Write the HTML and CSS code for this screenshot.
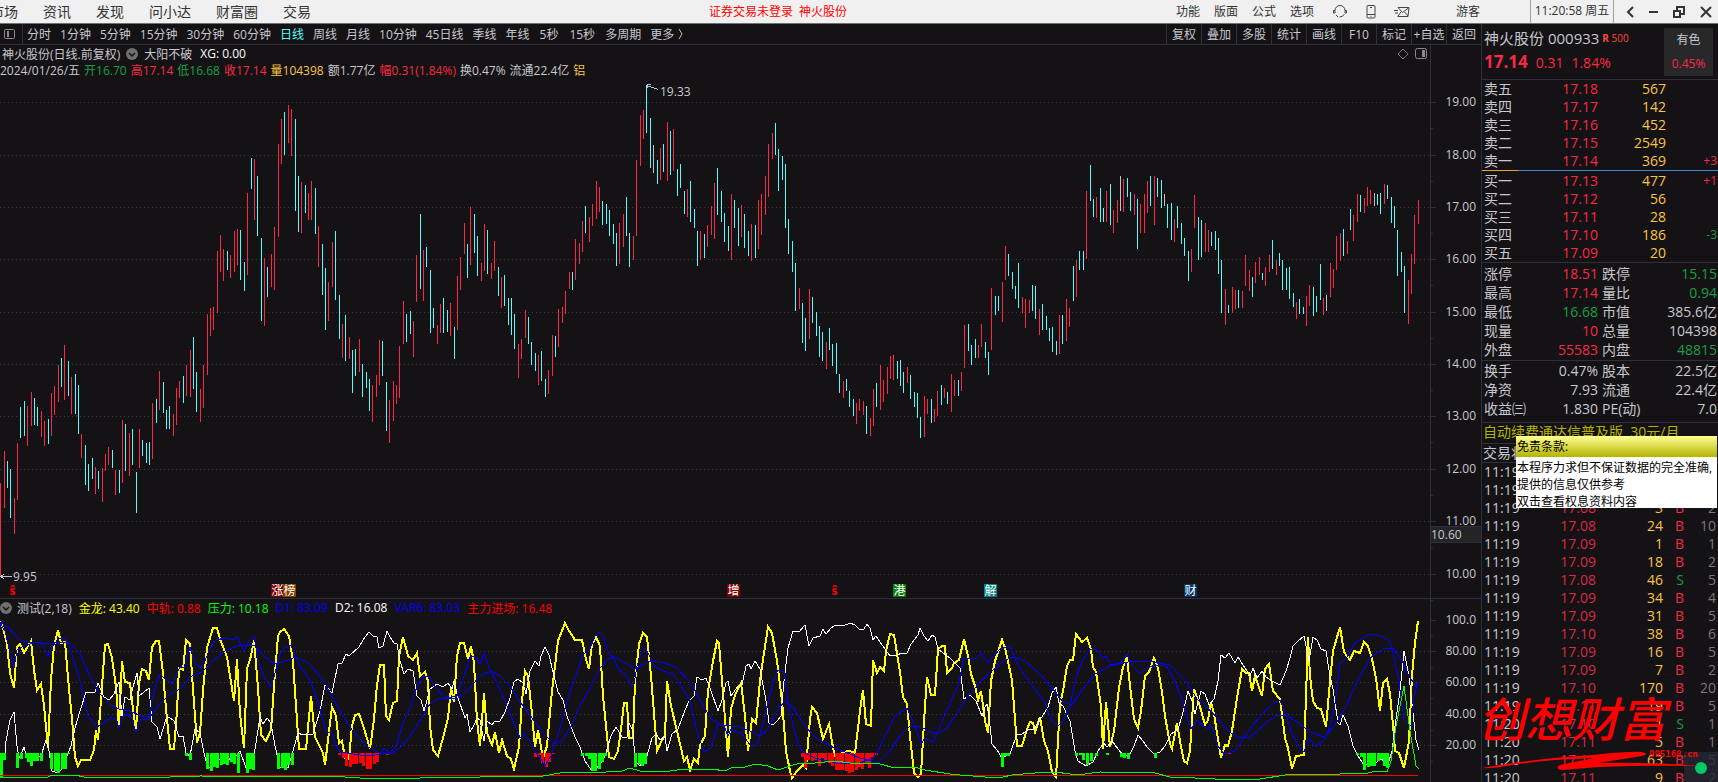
FILE: index.html
```html
<!DOCTYPE html>
<html lang="zh-CN">
<head>
    <meta charset="UTF-8">
    <meta name="viewport" content="width=device-width, initial-scale=1.0">
    <title>神火股份 000933</title>
    <link rel="stylesheet" href="styles.css">
</head>
<body>
    <header class="topbar">
        <nav class="menu">
            <a href="#">市场</a>
            <a href="#">资讯</a>
            <a href="#">发现</a>
            <a href="#">问小达</a>
            <a href="#">财富圈</a>
            <a href="#">交易</a>
        </nav>
        <div class="login">证券交易未登录&nbsp; 神火股份</div>
        <nav class="tools">
            <a href="#">功能</a>
            <a href="#">版面</a>
            <a href="#">公式</a>
            <a href="#">选项</a>
        </nav>
        <div class="top-icons">
            <button aria-label="客服">
                <svg width="16" height="14" viewBox="0 0 16 14" fill="none" stroke="#444"><path d="M3 8V5.500A5 5 0 0 1 13 5.500V8M3 5.500H1.500V8H3M13 5.500H14.500V8H13M12.500 9Q11 12 7.500 12M4 10L6 12"/></svg>
            </button>
            <button aria-label="手机">
                <svg width="10" height="14" viewBox="0 0 10 14" fill="none" stroke="#444"><rect x="1" y=".5" width="8" height="12.500" rx="1"/><path d="M1 9.500H9M4 2.500H6M4.500 11.300H5.500"/></svg>
            </button>
            <button aria-label="邮件">
                <svg width="16" height="12" viewBox="0 0 16 12" fill="none" stroke="#444"><path d="M4 1.500H15L14 10.500H3.500M4 1.500L8.500 6.500L15 1.500M4 10L7 6M14 10L10.500 6M0 4.500H4M1 7H4"/></svg>
            </button>
        </div>
        <div class="user">游客</div>
        <div class="clock">11:20:58 周五</div>
        <div class="win">
            <button aria-label="返回"><svg width="8" height="12" viewBox="0 0 8 12" fill="none" stroke="#333" stroke-width="2"><path d="M7 1L2 6L7 11"/></svg></button>
            <button aria-label="最小化"><svg width="10" height="12" viewBox="0 0 10 12" fill="none" stroke="#333" stroke-width="2"><path d="M0 6H9"/></svg></button>
            <button aria-label="还原"><svg width="12" height="12" viewBox="0 0 12 12" fill="none" stroke="#333" stroke-width="2"><path d="M1 5H7V11H1ZM4 4V1H11V8H8"/></svg></button>
            <button aria-label="关闭"><svg width="12" height="12" viewBox="0 0 12 12" fill="none" stroke="#333" stroke-width="2"><path d="M1 1L11 11M11 1L1 11"/></svg></button>
        </div>
    </header>

    <main class="main">
        <section class="left">
            <div class="toolbar">
                <button class="panel-btn" aria-label="侧栏">
                    <svg width="12" height="12" viewBox="0 0 12 12" fill="none" stroke="#8a8a8a"><rect x=".5" y="1.500" width="10" height="9" rx="1"/><path d="M4 3V9" stroke-width="2"/></svg>
                </button>
                <div class="periods">
                    <button>分时</button>
                    <button>1分钟</button>
                    <button>5分钟</button>
                    <button>15分钟</button>
                    <button>30分钟</button>
                    <button>60分钟</button>
                    <button class="active">日线</button>
                    <button>周线</button>
                    <button>月线</button>
                    <button>10分钟</button>
                    <button>45日线</button>
                    <button>季线</button>
                    <button>年线</button>
                    <button class="wide">5秒</button>
                    <button class="wide">15秒</button>
                    <button>多周期</button>
                    <button class="more">更多 <svg width="5" height="10" viewBox="0 0 5 10" fill="none" stroke="#c0c0c8"><path d="M1 0L4 5L1 10"/></svg></button>
                </div>
                <div class="actions">
                    <button>复权</button>
                    <button>叠加</button>
                    <button>多股</button>
                    <button>统计</button>
                    <button>画线</button>
                    <button>F10</button>
                    <button>标记</button>
                    <button>+自选</button>
                    <button>返回</button>
                </div>
            </div>

            <!-- K线主图 -->
            <div class="pane">
                <div class="pane-body">
                    <div class="info title-line">
                        <span>神火股份(日线.前复权)</span>
                        <svg class="drop" width="12" height="12" viewBox="0 0 12 12"><circle cx="6" cy="6" r="6" fill="#707070"/><path d="M3 5L6 8L9 5" fill="none" stroke="#141214" stroke-width="1.500"/></svg>
                        <span>大阳不破</span>
                        <span class="white">XG: 0.00</span>
                        <span class="info-icons">
                            <svg width="12" height="12" viewBox="0 0 12 12" fill="none" stroke="#777"><path d="M6 1L11 6L6 11L1 6Z"/></svg>
                            <svg width="12" height="12" viewBox="0 0 12 12" fill="none" stroke="#8a8a8a"><rect x=".5" y=".5" width="11" height="10" rx="2"/><path d="M8.500 2V9" stroke-width="3"/></svg>
                        </span>
                    </div>
                    <div class="info quote-line">
                        <span>2024/01/26/五</span>
                        <span class="green">开16.70</span>
                        <span class="red">高17.14</span>
                        <span class="green">低16.68</span>
                        <span class="red">收17.14</span>
                        <span class="gold">量104398</span>
                        <span>额1.77亿</span>
                        <span class="red">幅0.31(1.84%)</span>
                        <span>换0.47%</span>
                        <span>流通22.4亿</span>
                        <span class="gold">铝</span>
                    </div>
                    <div class="plot main-plot">
                        <svg id="kline" viewBox="0 0 1430 518" preserveAspectRatio="none"></svg>
                        <div id="marks"></div>
                    </div>
                </div>
                <div class="axis">
                    <svg id="axisMain" class="axis-main" width="51" height="520"></svg>
                    <div class="cursor-price">10.60</div>
                </div>
            </div>

            <!-- 指标副图 -->
            <div class="pane sub">
                <div class="pane-body">
                    <div class="info sub-info">
                        <svg class="drop" width="12" height="12" viewBox="0 0 12 12"><circle cx="6" cy="6" r="6" fill="#707070"/><path d="M3 5L6 8L9 5" fill="none" stroke="#141214" stroke-width="1.500"/></svg>
                        <span>测试(2,18)</span>
                        <span class="c-yellow">金龙: 43.40</span>
                        <span class="c-red">中轨: 0.88</span>
                        <span class="c-green">压力: 10.18</span>
                        <span class="c-blue">D1: 83.09</span>
                        <span class="white">D2: 16.08</span>
                        <span class="c-blue">VAR6: 83.03</span>
                        <span class="c-red">主力进场: 16.48</span>
                    </div>
                    <div class="plot sub-plot">
                        <svg id="indicator" viewBox="0 0 1430 166" preserveAspectRatio="none"></svg>
                    </div>
                </div>
                <div class="axis">
                    <svg id="axisSub" class="axis-sub" width="51" height="176"></svg>
                </div>
            </div>
        </section>

        <aside class="side">
            <div class="stock">
                <div>
                    <div class="stock-name">神火股份 000933<span class="flag"><b>R</b> 500</span></div>
                    <div class="stock-price"><b>17.14</b><span>0.31</span><span>1.84%</span></div>
                </div>
                <div class="sector">
                    <div>有色</div>
                    <div class="red">0.45%</div>
                </div>
            </div>

            <table class="book sell">
                <tr><td>卖五</td><td>17.18</td><td>567</td><td></td></tr>
                <tr><td>卖四</td><td>17.17</td><td>142</td><td></td></tr>
                <tr><td>卖三</td><td>17.16</td><td>452</td><td></td></tr>
                <tr><td>卖二</td><td>17.15</td><td>2549</td><td></td></tr>
                <tr><td>卖一</td><td>17.14</td><td>369</td><td class="red">+3</td></tr>
            </table>
            <div class="ratio"></div>
            <table class="book buy">
                <tr><td>买一</td><td>17.13</td><td>477</td><td class="red">+1</td></tr>
                <tr><td>买二</td><td>17.12</td><td>56</td><td></td></tr>
                <tr><td>买三</td><td>17.11</td><td>28</td><td></td></tr>
                <tr><td>买四</td><td>17.10</td><td>186</td><td class="green">-3</td></tr>
                <tr><td>买五</td><td>17.09</td><td>20</td><td></td></tr>
            </table>

            <div class="block stats-a">
                <table class="stats">
                    <tr><td>涨停</td><td class="red">18.51</td><td>跌停</td><td class="green">15.15</td></tr>
                    <tr><td>最高</td><td class="red">17.14</td><td>量比</td><td class="green">0.94</td></tr>
                    <tr><td>最低</td><td class="green">16.68</td><td>市值</td><td>385.6亿</td></tr>
                    <tr><td>现量</td><td class="red">10</td><td>总量</td><td>104398</td></tr>
                    <tr><td>外盘</td><td class="red">55583</td><td>内盘</td><td class="green">48815</td></tr>
                </table>
            </div>
            <div class="block stats-b">
                <table class="stats">
                    <tr><td>换手</td><td>0.47%</td><td>股本</td><td>22.5亿</td></tr>
                    <tr><td>净资</td><td>7.93</td><td>流通</td><td>22.4亿</td></tr>
                    <tr><td>收益㈢</td><td>1.830</td><td>PE(动)</td><td>7.0</td></tr>
                </table>
            </div>

            <a class="promo" href="#">自动续费通达信普及版&nbsp; 30元/月</a>
            <div class="status">交易状态</div>

            <table class="ticks">
                <tr><td>11:19</td><td></td><td></td><td></td><td></td></tr>
                <tr><td>11:19</td><td></td><td></td><td></td><td></td></tr>
                <tr><td>11:19</td><td>17.08</td><td>3</td><td class="red">B</td><td>2</td></tr>
                <tr><td>11:19</td><td>17.08</td><td>24</td><td class="red">B</td><td>10</td></tr>
                <tr><td>11:19</td><td>17.09</td><td>1</td><td class="red">B</td><td>1</td></tr>
                <tr><td>11:19</td><td>17.09</td><td>18</td><td class="red">B</td><td>2</td></tr>
                <tr><td>11:19</td><td>17.08</td><td>46</td><td class="green">S</td><td>5</td></tr>
                <tr><td>11:19</td><td>17.09</td><td>34</td><td class="red">B</td><td>4</td></tr>
                <tr><td>11:19</td><td>17.09</td><td>31</td><td class="red">B</td><td>5</td></tr>
                <tr><td>11:19</td><td>17.10</td><td>38</td><td class="red">B</td><td>6</td></tr>
                <tr><td>11:19</td><td>17.09</td><td>16</td><td class="red">B</td><td>5</td></tr>
                <tr><td>11:19</td><td>17.09</td><td>7</td><td class="red">B</td><td>2</td></tr>
                <tr><td>11:19</td><td>17.10</td><td>170</td><td class="red">B</td><td>20</td></tr>
                <tr><td>11:19</td><td>17.11</td><td>19</td><td class="red">B</td><td>5</td></tr>
                <tr><td>11:20</td><td>17.10</td><td>1</td><td class="green">S</td><td>1</td></tr>
                <tr><td>11:20</td><td>17.11</td><td>5</td><td class="red">B</td><td>1</td></tr>
                <tr><td>11:20</td><td>17.11</td><td>63</td><td class="red">B</td><td>5</td></tr>
                <tr><td>11:20</td><td>17.11</td><td>9</td><td class="red">B</td><td>2</td></tr>
            </table>

            <div class="tooltip">
                <div class="tooltip-title">免责条款:</div>
                <div class="tooltip-text">本程序力求但不保证数据的完全准确,<br>提供的信息仅供参考<br>双击查看权息资料内容</div>
            </div>

            <div class="corner"></div>
            <div class="watermark">
                <div class="brand">创想财富</div>
                <svg width="220" height="20" viewBox="0 0 220 20" fill="#f00"><path d="M0 18Q50 9 110 5Q150 1 160 2Q168 4 160 6L116 13Q170 12 218 16Q160 15 118 17L80 20Q72 18 78 15L112 8Q60 10 30 15Q8 19 0 18Z"/></svg>
                <div class="site">995168.cn</div>
            </div>
        </aside>
    </main>

    <script src="chart.js"></script>
</body>
</html>
```

FILE: styles.css
```css
* {
    box-sizing: border-box;
}

body {
    margin: 0;
    min-height: 100vh;
    overflow: hidden;
    background: #141214;
    color: #c8c8d0;
    font-family: "Open Sans", "Noto Sans CJK SC", sans-serif;
    font-size: 12px;
}

a {
    color: inherit;
    text-decoration: none;
}

button {
    padding: 0;
    border: 0;
    background: none;
    color: inherit;
    font: inherit;
    white-space: nowrap;
}

svg {
    display: block;
}

.red { color: #fa2846; }
.green { color: #14a046; }
.gold { color: #fac346; }
.white { color: #fff; }
.c-yellow { color: #ff0; }
.c-red { color: #f00; }
.c-green { color: #0f0; }
.c-blue { color: #00f; }

/* 顶部菜单 */
.topbar {
    position: relative;
    display: flex;
    align-items: center;
    height: 24px;
    background: #f0f0f0;
    border-bottom: 1px solid #707070;
    color: #333;
    line-height: 20px;
    white-space: nowrap;
}

.menu {
    display: flex;
    gap: 25px;
    margin-left: -10px;
    font-size: 14px;
}

.login {
    position: absolute;
    left: 0;
    right: 0;
    padding-right: 162px;
    text-align: center;
    color: #f00;
    pointer-events: none;
}

.tools {
    display: flex;
    gap: 14px;
    margin-left: auto;
}

.top-icons {
    display: flex;
    align-items: center;
    gap: 18px;
    margin-left: 18px;
    width: 124px;
}

.user {
    width: 74px;
}

.clock {
    width: 84px;
    height: 23px;
    line-height: 22px;
    border-left: 1px solid #a0a0a0;
    border-right: 1px solid #a0a0a0;
    text-align: center;
}

.win {
    display: flex;
    align-items: center;
    justify-content: space-between;
    width: 104px;
    padding: 0 6px 0 12px;
}

.main {
    display: grid;
    grid-template-columns: 1fr 237px;
}

.left {
    min-width: 0;
}

/* 周期工具条 */
.toolbar {
    display: flex;
    align-items: center;
    height: 21px;
    border-bottom: 1px solid #2d303c;
    white-space: nowrap;
}

.panel-btn {
    width: 23px;
    height: 20px;
    padding-left: 4px;
    border-right: 1px solid #2d303c;
}

.periods {
    display: flex;
    gap: 9px;
    padding-left: 4px;
}

.periods .active {
    color: #54fcfc;
}

.periods .wide {
    padding: 0 1px;
}

.periods .more {
    display: flex;
    align-items: center;
    gap: 4px;
}

.actions {
    display: flex;
    margin-left: auto;
}

.actions button {
    width: 35px;
    height: 20px;
    border-left: 1px solid #2d303c;
}

/* 图表 */
.pane {
    display: grid;
    grid-template-columns: 1fr 51px;
    border-bottom: 1px solid #2d303c;
}

.pane.sub {
    border-bottom: 0;
}

.pane-body {
    min-width: 0;
}

.info {
    display: flex;
    align-items: center;
    gap: 7px;
    height: 17px;
    padding-left: 2px;
    white-space: nowrap;
}

.info .drop {
    margin: 0 -2px;
}

.info-icons {
    display: flex;
    gap: 6px;
    margin-left: auto;
    padding-right: 3px;
}

.quote-line {
    height: 18px;
    padding: 0 0 2px;
    gap: 4px;
}

.title-line {
    gap: 8px;
}

.plot {
    position: relative;
}

.plot svg {
    width: 100%;
    height: 100%;
}

.main-plot {
    height: 518px;
}

.sub-plot {
    height: 166px;
}

.mark {
    position: absolute;
    top: 504px;
    width: 13px;
    height: 13px;
    color: #fff;
    line-height: 13px;
    text-align: center;
}

.mark.dark { background: #800000; }
.mark.brown { background: #804000; }
.mark.forest { background: #008000; }
.mark.teal { background: #008080; }
.mark.navy { background: #003468; }

.mark.cash {
    color: #f00;
    font-weight: bold;
}

.note {
    position: absolute;
    line-height: 16px;
}

.note.low { top: 489px; }
.note.high { top: 4px; }

.axis {
    position: relative;
    border-left: 1px solid #2d303c;
}

.axis svg {
    overflow: visible;
}

.axis-main {
    margin-top: 35px;
    height: 518px;
}

.cursor-price {
    position: absolute;
    left: 0;
    right: 0;
    top: 481px;
    height: 17px;
    border-top: 1px solid #2d303c;
    border-bottom: 1px solid #2d303c;
    background: #242426;
    line-height: 15px;
}

/* 右侧行情 */
.side {
    position: relative;
    border-left: 1px solid #2d303c;
    overflow: hidden;
    font-size: 14px;
}

.stock {
    display: flex;
    justify-content: space-between;
    height: 56px;
    padding: 4px 5px 0 2px;
    border-bottom: 1px solid #2d303c;
    white-space: nowrap;
}

.stock-name {
    font-size: 15px;
    line-height: 20px;
}

.flag {
    margin-left: 3px;
    color: #ff4646;
    font-size: 10px;
    vertical-align: 2px;
}

.stock-price {
    display: flex;
    align-items: baseline;
    gap: 8px;
    color: #fa2846;
    line-height: 28px;
}

.stock-price b {
    font-size: 17px;
}

.sector {
    width: 49px;
    height: 48px;
    background: #28282b;
    font-size: 12px;
    line-height: 24px;
    text-align: center;
}

table {
    width: 100%;
    border-collapse: collapse;
    table-layout: fixed;
}

td {
    height: 18px;
    padding: 0;
    line-height: 18px;
    text-align: right;
    white-space: nowrap;
}

td:first-child {
    padding-left: 2px;
    text-align: left;
}

.book td:nth-child(1) { width: 46px; }
.book td:nth-child(2) { width: 70px; color: #fa2846; }
.book td:nth-child(3) { width: 68px; color: #fac346; }
.book td:nth-child(4) { padding-right: 1px; font-size: 12px; }

.ratio {
    height: 1px;
    margin-bottom: 1px;
    background: linear-gradient(to right, #f0a032 36px, #3c8cdc 36px);
}

.buy {
    border-bottom: 1px solid #2d303c;
}

.block {
    border-bottom: 1px solid #2d303c;
}

.stats-a { padding: 1px 0; }
.stats-b { padding-bottom: 4px; }

.stats td {
    height: 19px;
    line-height: 19px;
}

.stats td:nth-child(1) { width: 46px; }
.stats td:nth-child(2) { width: 70px; }
.stats td:nth-child(3) { width: 46px; padding-left: 4px; text-align: left; }
.stats td:nth-child(4) { padding-right: 1px; }

.promo {
    display: block;
    height: 21px;
    padding-left: 1px;
    border-bottom: 1px solid #2d303c;
    color: #b4b400;
    line-height: 18px;
}

.status {
    height: 19px;
    padding-left: 1px;
    border-bottom: 1px solid #2d303c;
    line-height: 17px;
}

.ticks td:nth-child(1) { width: 46px; }
.ticks td:nth-child(2) { width: 68px; color: #dc2846; }
.ticks td:nth-child(3) { width: 67px; color: #fac346; }
.ticks td:nth-child(4) { width: 21px; }
.ticks td:nth-child(5) { padding-right: 2px; color: #78787c; }

.tooltip {
    position: absolute;
    top: 412px;
    left: 34px;
    right: 1px;
    background: #fff;
    color: #000;
    font-size: 12px;
    white-space: nowrap;
}

.tooltip-title {
    height: 21px;
    padding-left: 1px;
    background: linear-gradient(#ffff96, #b4b400);
    line-height: 21px;
}

.tooltip-text {
    padding: 2px 0 0 1px;
    height: 51px;
    line-height: 17px;
}

.corner {
    position: absolute;
    right: 0;
    top: 728px;
    width: 34px;
    height: 30px;
    background: rgba(36, 39, 50, 0.8);
}

.corner::after {
    content: "";
    position: absolute;
    left: 11px;
    top: 10px;
    width: 12px;
    height: 12px;
    border-radius: 50%;
    background: #00c864;
}

.watermark {
    position: absolute;
    left: 0;
    top: 660px;
    color: #f00;
    pointer-events: none;
}

.brand {
    margin-left: -4px;
    font-family: "Noto Sans CJK SC", sans-serif;
    font-size: 47px;
    font-style: italic;
    font-weight: 500;
    line-height: 66px;
    white-space: nowrap;
}

.site {
    position: absolute;
    left: 167px;
    top: 65px;
    font-family: "DejaVu Sans Mono", monospace;
    font-size: 9px;
    font-weight: bold;
}
```

FILE: chart.js
```js
// r = 阳线, c = 阴线, w = 平盘; 数值为 最高-最低 的纵坐标
const bars = `
r403-496 r371-428 c381-408 c389-438 r418-454 r363-420 c327-358 c321-356 r326-366 r312-346
c318-345 c327-346 r331-357 r341-366 c339-364 r313-356 r306-335 r285-322 c278-307 r265-320
c281-316 r297-334 c294-334 c305-354 r354-378 c365-405 c384-411 c378-399 r387-414 c391-409
r388-422 r374-391 r367-385 c370-388 r390-415 c390-413 r340-403 c344-391 r353-396 c349-385
c392-433 r349-388 c360-376 c363-383 c362-385 r323-379 c319-343 r291-330 c302-333 c330-349
c326-349 r334-356 r308-345 r301-318 c296-323 r285-316 r270-317 c257-309 c292-332 r309-342
r285-328 r234-295 r228-256 r227-250 r171-233 r155-192 r169-201 c171-190 r175-198 r151-192
r149-185 c150-200 c182-211 r113-195 c78-109 r79-140 c96-156 c158-241 r178-246 c187-217
r174-207 r147-210 r64-157 r39-84 c32-75 r25-63 r29-76 c39-131 c96-152 r102-153
c105-133 r113-140 r101-140 c108-154 r146-187 c164-215 c188-250 r202-241 r162-207 c151-220
c215-259 r244-278 c235-281 r257-279 c270-313 c269-296 r259-292 c284-317 c292-308 c299-331
r305-342 r295-317 r260-305 c261-296 c302-351 r320-363 r301-341 r305-324 r266-318 r221-264
c234-262 c231-254 r241-277 r175-222 c134-209 r170-221 c167-187 c190-253 c228-248 r245-264
r224-253 c218-253 c230-252 r223-256 c247-279 r196-250 r177-210 r143-174 c164-198 r127-185
c134-173 c156-196 r183-201 r144-191 c150-194 r183-199 r161-191 c187-216 r197-228 c195-226
c218-245 c218-255 c234-269 r264-298 r259-279 r230-258 c237-264 c262-285 c273-291 r275-305
c271-301 c299-317 r290-314 r255-296 c256-277 r229-267 r227-243 r211-234 r192-209 c192-210
r159-200 r163-184 r141-172 c126-153 r137-162 r124-146 r101-139 r107-132 c121-145 c124-144
c130-156 c144-164 c153-186 r143-184 r134-167 c117-156 c153-187 r156-180 r80-156 r35-86
r30-59 c5-53 c38-88 w65-93 c80-104 r68-100 c64-92 r42-101 c51-95 r49-91
c89-116 c84-108 c111-134 r109-137 c101-142 c129-148 c151-186 r151-180 c154-178 r145-167
r126-155 r103-159 c88-135 c111-142 c133-162 c146-171 r114-180 c120-148 c128-166 r125-157
c134-168 c151-176 r144-181 c145-178 r120-169 r114-155 r96-135 r64-117 r53-79 c43-75
c69-111 c76-100 c84-148 c139-174 c161-192 c183-231 r208-229 c223-263 c238-271 r209-259
c217-243 c232-256 c246-277 c252-281 r262-289 c248-270 c264-286 c263-294 c294-313 r301-318
c299-311 c311-327 c319-336 r323-344 r319-331 r321-335 c326-354 r338-356 r309-346 c303-327
r285-330 r300-322 r287-314 r276-299 r275-300 c281-299 c280-306 c292-313 r287-303 c295-319
c312-327 c313-338 c337-358 r316-357 r319-334 c319-343 r329-342 r311-336 c305-325 r308-318
c312-324 r294-332 r300-316 c300-316 r292-311 r245-288 c244-271 c265-285 c259-278 r265-278
r244-267 c262-278 c272-295 r208-270 c216-235 c216-231 r202-242 r166-200 c174-196 c192-209
c206-219 c183-228 r217-233 r219-248 r220-233 c205-231 c206-239 r229-255 c224-250 c236-250
c248-261 c247-272 c261-275 r235-274 c235-264 r219-261 r228-247 c186-221 r180-217 c171-190
c171-190 r111-179 c85-121 c119-137 r117-138 c108-142 c128-142 r111-142 c104-145 r130-153
r120-143 w96-131 r99-132 c98-117 c112-131 r114-135 c119-169 r124-153 r114-153 r101-133
c96-126 r96-145 c98-117 c100-128 w114-126 c124-148 c123-160 r139-162 c126-148 c143-164
c158-176 c171-201 r169-192 r115-148 c137-180 c140-177 r143-172 r150-172 c152-166 c151-170
c158-194 c180-233 r209-245 c225-233 r207-233 r210-229 c210-228 r211-228 r175-206 r190-211
c197-217 r182-203 r177-195 c193-200 r187-206 r175-192 c160-189 r180-195 c173-186 c180-210
c188-210 c187-219 c213-227 r222-239 c219-234 c227-234 r216-246 r205-226 c207-236 c216-232
c184-220 r218-235 w215-231 r183-217 r189-208 r156-190 r153-181 c149-176 r161-174 c129-150
r135-161 r114-142 c115-132 r118-133 r107-126 r110-124 w113-126 c114-125 c113-134 r104-124
c105-119 c117-143 c126-148 c150-196 c172-192 c186-233 r200-244 r174-214 r135-184 r120-144`;

const lines = {
    slow: "0,6 8,11 14,18 20,24 28,26 48,28 60,26 69,27 80,38 90,60 100,78 110,88 119,93 130,95 143,101 151,100 160,88 170,78 180,73 190,61 202,56 213,45 225,35 237,30 254,29 264,40 274,48 283,46 296,41 310,48 325,67 340,95 352,114 366,130 380,137 392,137 402,130 415,113 430,88 440,82 457,83 468,74 480,60 491,55 500,60 510,70 520,86 532,102 543,117 554,128 562,125 570,112 580,90 590,72 600,52 608,43 615,41 625,47 635,53 650,45 665,47 677,52 690,66 700,84 711,103 722,109 740,111 750,115 760,120 768,113 777,94 785,85 793,91 805,110 815,121 830,130 845,136 860,142 878,147 890,135 900,120 910,110 920,110 930,116 937,118 947,112 955,100 965,84 980,66 990,57 1003,45 1013,41 1025,45 1040,58 1055,76 1063,86 1072,89 1082,74 1095,58 1110,50 1133,45 1155,46 1170,49 1185,64 1197,83 1212,96 1225,112 1236,121 1250,121 1265,108 1277,99 1288,100 1300,108 1310,116 1324,121 1335,109 1345,92 1360,60 1372,40 1385,32 1393,32 1402,45 1410,62 1416,70 1418,66",
    fast: "0,7 5,15 10,36 14,52 17,34 22,31 28,29 34,26 42,27 48,41 52,31 56,26 60,22 65,23 69,30 75,48 80,65 84,82 88,100 93,106 97,111 103,107 112,101 116,104 119,112 123,100 130,98 136,116 141,103 149,103 152,85 156,68 160,58 165,63 173,68 178,55 180,51 184,52 190,31 194,45 200,52 205,45 210,32 216,24 225,22 234,24 237,20 244,35 249,25 254,20 258,44 264,61 271,71 275,57 279,40 284,32 291,29 295,40 300,50 310,64 318,86 324,108 326,116 332,117 336,130 340,136 360,139 370,140 380,138 384,132 390,137 397,128 403,107 410,92 416,73 423,60 428,60 436,72 445,82 457,80 464,60 470,41 475,40 478,45 480,48 484,37 490,54 497,67 505,85 513,105 520,122 524,117 530,125 535,135 540,142 545,150 551,140 556,125 562,105 568,82 575,62 583,38 589,35 595,20 599,16 603,20 608,35 614,43 619,54 626,59 631,69 634,68 637,50 642,35 645,32 650,41 655,51 664,55 673,58 680,68 690,85 697,115 704,136 711,132 718,108 724,110 728,120 731,113 742,118 751,130 757,129 765,100 773,66 778,54 784,56 788,85 792,105 798,128 803,136 815,142 840,148 860,147 875,141 885,120 895,100 907,92 914,108 921,128 925,122 933,126 942,106 952,82 958,70 964,42 970,43 977,42 981,37 988,47 992,42 1000,33 1010,30 1016,45 1022,55 1034,72 1044,85 1052,105 1057,110 1062,107 1070,90 1075,65 1082,45 1090,33 1097,34 1103,42 1106,40 1111,49 1120,47 1127,38 1133,50 1140,57 1150,51 1160,49 1166,50 1174,63 1182,83 1188,105 1191,113 1197,104 1207,113 1212,110 1218,130 1224,138 1235,135 1240,128 1245,120 1252,110 1261,100 1270,90 1280,84 1286,100 1292,118 1300,132 1304,136 1309,122 1316,131 1325,123 1330,110 1335,88 1340,47 1346,43 1355,27 1363,22 1370,18 1380,20 1388,23 1392,32 1398,60 1404,103 1411,110 1414,80 1418,66",
    gold: "0,5 3,12 7,28 10,57 14,72 17,31 20,28 24,37 28,30 31,25 34,54 37,74 41,68 44,90 48,132 51,64 54,30 58,14 61,27 65,26 68,62 72,103 75,141 78,150 81,144 90,144 94,134 96,114 98,124 101,84 105,29 108,28 112,42 116,71 119,112 122,45 125,66 130,67 133,93 136,114 139,67 142,53 146,55 149,64 152,31 156,25 159,25 163,57 166,93 170,133 174,133 177,95 179,52 183,54 186,24 190,28 193,73 197,127 200,117 203,75 207,32 213,12 217,12 220,23 227,41 231,66 234,85 237,43 240,98 244,132 247,53 251,40 254,24 258,72 261,119 266,125 271,114 274,70 278,20 280,16 284,13 289,20 293,45 296,90 299,133 306,133 311,80 315,121 323,137 325,149 328,124 332,91 336,100 339,127 342,125 345,142 349,143 352,110 355,99 359,98 362,106 366,119 370,133 374,103 377,69 380,49 384,49 386,100 389,104 393,87 397,85 399,40 403,21 408,40 413,44 417,37 420,60 425,56 428,65 430,110 433,134 438,140 443,122 448,102 451,72 454,86 457,40 460,27 464,27 468,43 471,30 474,47 477,105 480,130 484,77 487,117 492,129 495,116 499,137 502,124 507,140 511,143 514,153 519,131 522,85 525,55 528,60 532,98 535,131 538,114 543,142 547,130 552,75 558,25 565,7 568,13 575,24 582,24 586,43 589,53 592,28 596,21 600,30 603,80 608,130 609,141 614,143 618,135 622,105 624,87 627,87 629,122 633,122 635,66 639,28 643,17 647,21 651,60 655,110 657,135 662,124 665,120 667,65 671,90 677,115 684,145 687,141 690,154 694,143 698,147 700,129 705,120 708,75 713,45 717,25 719,27 724,90 728,141 731,93 735,79 741,67 745,100 748,135 752,103 756,107 760,65 764,37 768,11 772,17 777,45 782,85 786,135 790,155 792,162 797,155 803,149 806,152 810,103 812,91 817,97 823,123 829,108 834,137 837,145 843,136 850,135 855,137 861,87 863,74 866,108 871,110 873,44 877,57 880,51 884,55 886,35 890,18 894,19 900,56 903,81 907,88 910,120 914,157 918,161 921,158 925,90 927,61 931,79 935,79 938,33 942,30 945,30 947,57 952,52 954,47 959,44 964,23 968,40 971,58 975,70 978,84 981,75 985,105 988,117 991,65 995,45 1002,24 1005,32 1012,64 1014,90 1017,130 1022,130 1027,113 1030,106 1033,107 1035,116 1040,101 1044,125 1048,135 1052,156 1056,161 1060,88 1063,75 1067,50 1070,44 1073,44 1076,18 1082,26 1087,22 1091,33 1093,51 1096,56 1101,90 1103,133 1106,86 1110,131 1114,115 1119,72 1123,51 1127,41 1130,70 1134,103 1138,112 1141,95 1145,60 1149,56 1154,42 1158,52 1162,76 1165,100 1170,128 1172,133 1177,107 1180,125 1184,145 1187,147 1190,135 1194,73 1199,87 1205,109 1208,104 1211,86 1214,98 1218,123 1221,142 1225,129 1228,130 1232,115 1237,82 1242,53 1246,57 1249,57 1252,75 1255,60 1262,80 1265,53 1269,48 1273,75 1280,83 1285,122 1288,132 1292,153 1296,140 1304,139 1308,21 1310,60 1313,85 1317,92 1321,93 1326,111 1330,65 1333,35 1340,11 1344,36 1350,44 1354,35 1360,37 1364,26 1368,30 1372,43 1376,62 1380,95 1383,67 1387,63 1390,78 1394,120 1395,135 1399,137 1404,152 1409,125 1412,60 1415,27 1418,5",
    white: "0,151 5,140 6,125 10,104 14,96 17,130 19,142 22,136 24,131 27,142 35,140 41,140 46,124 49,135 52,155 58,157 63,152 67,140 71,130 75,112 80,95 86,76 95,76 98,67 104,81 109,84 114,78 119,66 122,100 125,81 130,84 133,71 137,57 139,80 149,72 152,106 157,111 160,123 166,103 169,101 174,105 179,121 183,120 186,137 190,140 195,113 200,117 204,137 208,152 213,149 218,145 225,139 232,145 240,135 246,152 254,140 260,101 263,108 267,102 271,107 275,130 280,151 288,152 293,135 298,117 303,119 313,118 320,95 325,69 332,77 338,48 342,47 346,38 349,40 359,31 365,21 369,16 373,20 377,21 379,32 383,30 387,15 390,21 394,27 397,28 400,45 404,58 408,53 413,55 417,80 421,84 424,95 430,73 437,68 443,71 448,67 452,73 454,65 458,82 465,102 467,98 470,116 474,109 477,102 480,104 484,125 487,105 492,109 494,106 500,105 505,96 510,82 514,66 518,63 523,67 526,78 530,55 535,45 539,50 541,40 545,31 549,39 554,60 558,76 563,84 567,100 573,116 576,123 580,131 585,145 592,155 599,150 605,140 611,120 616,111 622,121 627,121 629,107 633,115 635,145 640,150 647,140 652,122 656,118 660,124 665,120 667,135 672,118 678,113 685,94 689,85 694,80 697,61 702,64 706,62 711,75 718,95 722,84 726,67 728,65 731,80 738,70 742,69 746,50 749,48 751,53 755,45 760,53 767,90 769,107 773,109 777,105 781,100 784,65 788,32 793,15 799,16 805,9 809,30 813,22 820,20 823,13 826,18 831,12 836,9 843,10 850,7 855,9 860,14 864,13 867,8 870,12 873,24 876,20 880,26 885,33 890,40 897,39 902,37 907,37 911,28 918,19 920,12 924,20 928,25 932,19 935,21 938,33 943,37 950,42 960,52 964,83 970,79 976,85 982,100 985,91 987,88 990,110 992,128 997,134 1002,142 1010,138 1017,118 1022,118 1028,114 1034,113 1040,104 1048,91 1052,77 1056,71 1059,87 1063,90 1070,105 1075,135 1078,145 1086,150 1093,146 1098,135 1104,127 1107,131 1112,125 1118,133 1124,140 1130,138 1134,130 1138,119 1143,125 1147,131 1154,138 1160,136 1165,130 1171,118 1178,113 1182,100 1185,88 1188,75 1192,85 1195,98 1201,75 1205,78 1209,89 1214,83 1218,65 1221,39 1225,42 1229,37 1235,47 1238,41 1243,49 1247,55 1250,60 1253,52 1257,62 1262,55 1266,61 1272,65 1280,69 1286,55 1290,42 1293,30 1298,25 1304,20 1309,45 1313,21 1317,24 1321,33 1326,35 1330,60 1333,73 1338,107 1340,109 1343,99 1348,110 1353,130 1358,140 1364,149 1374,148 1381,143 1388,148 1392,135 1395,110 1400,75 1404,35 1409,60 1413,97 1416,124 1419,134",
    green: "0,161 48,161 52,159 75,159 84,161 135,161 140,162 200,160 345,161 360,162 380,163 400,162 420,162 432,161 480,161 512,160 543,160 560,157 575,156 590,157 622,155 630,152 640,155 670,155 685,153 700,154 712,153 725,155 733,151 745,151 755,148 768,150 778,154 790,150 800,147 815,147 835,145 850,147 865,147 880,148 895,152 915,151 925,154 950,158 960,159 985,161 1003,161 1012,159 1035,157 1055,156 1070,158 1085,158 1100,156 1155,157 1170,161 1195,162 1215,163 1260,163 1285,159 1300,158 1330,159 1350,157 1365,158 1375,155 1387,156 1391,145 1396,110 1404,70 1410,115 1416,150 1419,153"
};

// 柱状: x:高度
const greenBars = "0:24 3:7 16:15 20:6 25:5 27:9 30:13 33:8 36:8 40:8 50:16 54:18 57:20 61:16 64:16 67:1 185:3 189:7 206:16 210:18 213:14 216:15 220:12 223:11 226:12 230:9 233:11 237:20 246:20 249:16 252:17 277:16 281:15 284:17 287:12 291:12 581:3 585:3 588:6 591:18 594:18 598:16 601:9 604:3 634:14 638:11 641:13 644:11 1001:14 1004:3 1007:3 1075:3 1079:2 1082:7 1086:12 1090:8 1095:3 1106:2 1120:4 1123:5 1127:6 1154:5 1356:2 1360:4 1363:17 1367:14 1370:13 1373:13 1377:8 1380:6 1383:13 1386:15";
const redBars = "338:2 342:5 345:13 349:14 352:11 355:11 359:10 362:13 366:16 369:16 373:11 376:9 386:2 534:4 538:2 541:10 545:14 548:9 552:1 801:4 804:15 807:7 811:8 814:7 818:13 821:5 824:9 828:10 831:13 835:17 838:17 841:17 845:18 848:20 851:19 855:17 858:14 861:16 865:11 868:15 871:4 875:2 1228:1";

const colors = { r: "#fa2846", c: "#54fcfc", w: "#c0c0cc" };

function dotted(y) {
    return `<line x1="0" x2="1430" y1="${y + 0.5}" y2="${y + 0.5}" stroke="#3a3a42" stroke-dasharray="1 3"/>`;
}

function polyline(points, color, width) {
    return `<polyline points="${points}" fill="none" stroke="${color}" stroke-width="${width}"/>`;
}

function histogram(data, color) {
    return data.split(" ").map(d => {
        const [x, h] = d.split(":");
        return `<rect x="${x}" y="137" width="3" height="${h}" fill="${color}"/>`;
    }).join("");
}

// 主图
let out = [22, 75, 127, 179, 232, 284, 336, 389, 441, 494].map(dotted).join("");
bars.trim().split(/\s+/).forEach((bar, i) => {
    const x = Math.round(i * 3.383 + 0.2);
    const [top, bottom] = bar.slice(1).split("-").map(Number);
    out += `<rect x="${x}" y="${top}" width="1" height="${bottom - top}" fill="${colors[bar[0]]}"/>`;
});
out += '<path d="M0 496.500H12M4 494L1 496.500L4 499M647 5.500L658 9.500M651 4.500H647V8" fill="none" stroke="#c0c0cc"/>';
document.getElementById("kline").innerHTML = `<g shape-rendering="crispEdges">${out}</g>`;

const marks = [
    [6, "cash", "ŝ"], [271, "dark", "涨"], [283, "brown", "榜"], [727, "dark", "增"],
    [828, "cash", "ŝ"], [893, "forest", "港"], [984, "teal", "解"], [1184, "navy", "财"]
];
document.getElementById("marks").innerHTML = marks.map(([x, cls, text]) =>
    `<span class="mark ${cls}" style="left:${x / 14.3}%">${text}</span>`).join("") +
    `<span class="note low" style="left:${13 / 14.3}%">9.95</span>` +
    `<span class="note high" style="left:${660 / 14.3}%">19.33</span>`;

// 副图
document.getElementById("indicator").innerHTML = '<g shape-rendering="crispEdges">' +
    [35, 66, 98, 129].map(dotted).join("") +
    polyline(lines.gold, "#ff0", 2) +
    polyline(lines.white, "#fff", 1) +
    histogram(greenBars, "#0f0") +
    histogram(redBars, "#f00") +
    polyline(lines.fast, "#00f", 1) +
    polyline(lines.slow, "#00f", 1) +
    polyline("0,159.500 1418,159.500", "#f00", 1) +
    polyline(lines.green, "#0f0", 1) + "</g>";

// 坐标轴
function drawAxis(id, ticks, half) {
    document.getElementById(id).innerHTML = ticks.map(([y, label]) =>
        `<path d="M0 ${y + 0.5}H5M0 ${y + half + 0.5}H2" stroke="#2d303c"/>` +
        `<text x="45" y="${y + 4}" text-anchor="end" fill="#c8c8d0" font-size="12">${label}</text>`).join("");
}
drawAxis("axisMain", [[22, "19.00"], [75, "18.00"], [127, "17.00"], [179, "16.00"], [232, "15.00"],
    [284, "14.00"], [336, "13.00"], [389, "12.00"], [441, "11.00"], [494, "10.00"]], 26);
drawAxis("axisSub", [[21, "100.0"], [52, "80.00"], [83, "60.00"], [115, "40.00"], [146, "20.00"]], 16);
```
